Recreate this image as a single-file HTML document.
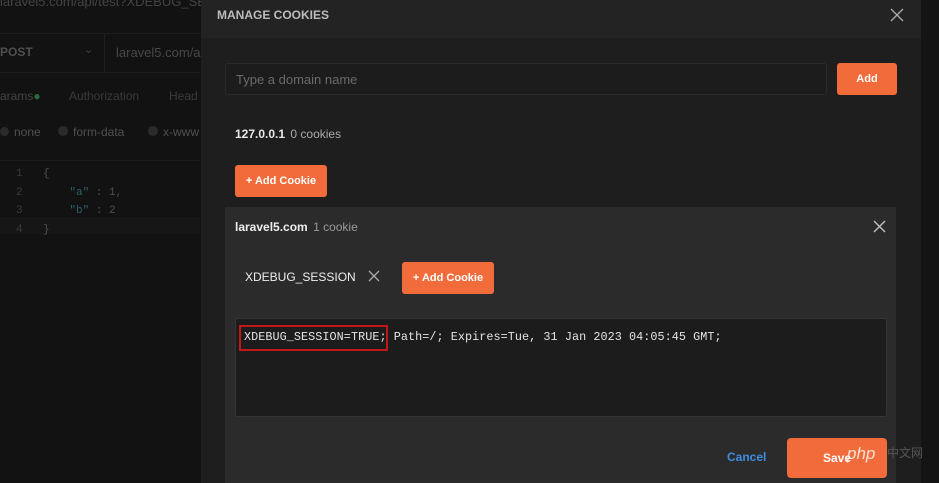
<!DOCTYPE html>
<html><head><style>
*{margin:0;padding:0;box-sizing:border-box}
body{width:939px;height:483px;overflow:hidden;background:#121212;font-family:"Liberation Sans",sans-serif;position:relative}
.a{position:absolute;white-space:nowrap}
.btn{position:absolute;background:#f26b3a;color:#fff;font-weight:bold;font-size:11px;border-radius:3px;display:flex;align-items:center;justify-content:center}
.mono{font-family:"Liberation Mono",monospace}
</style></head><body>
<!-- backdrop -->
<div class="a" style="left:0;top:-6px;color:#444;font-size:13px">laravel5.com/api/test?XDEBUG_SE</div>
<div class="a" style="left:0;top:33px;width:200px;height:40px;border-top:1px solid #1c1c1c;border-bottom:1px solid #1c1c1c"></div>
<div class="a" style="left:104px;top:34px;width:1px;height:38px;background:#1f1f1f"></div>
<div class="a" style="left:0;top:45px;color:#4e4e4e;font-size:12px;font-weight:bold">POST</div>
<div class="a" style="left:84px;top:43px;color:#444;font-size:11px">&#8964;</div>
<div class="a" style="left:116px;top:45px;color:#484848;font-size:13px">laravel5.com/ap</div>
<div class="a" style="left:0;top:89px;color:#444;font-size:12px">arams<span style="color:#2e6b3a">●</span></div>
<div class="a" style="left:69px;top:89px;color:#3a3a3a;font-size:12px">Authorization</div>
<div class="a" style="left:169px;top:89px;color:#3a3a3a;font-size:12px">Head</div>
<div class="a" style="left:0;top:125px;color:#505050;font-size:12px"><span style="display:inline-block;width:9px;height:9px;border-radius:50%;background:#2a2a2a;margin-right:5px"></span>none</div>
<div class="a" style="left:58px;top:125px;color:#505050;font-size:12px"><span style="display:inline-block;width:10px;height:10px;border-radius:50%;background:#2a2a2a;margin-right:5px"></span>form-data</div>
<div class="a" style="left:148px;top:125px;color:#505050;font-size:12px"><span style="display:inline-block;width:10px;height:10px;border-radius:50%;background:#2a2a2a;margin-right:5px"></span>x-www</div>
<div class="a" style="left:0;top:160px;width:200px;height:1px;background:#1a1a1a"></div>
<div class="a" style="left:0;top:217px;width:200px;height:17px;background:#161616"></div>
<div class="a mono" style="left:16px;top:165px;color:#3a3a3a;font-size:11px;line-height:18.5px">1<br>2<br>3<br>4</div>
<div class="a mono" style="left:43px;top:165px;color:#505050;font-size:11px;line-height:18.5px">{<br>&nbsp;&nbsp;&nbsp;&nbsp;<span style="color:#2d5f6e">"a"</span> : 1,<br>&nbsp;&nbsp;&nbsp;&nbsp;<span style="color:#2d5f6e">"b"</span> : 2<br>}</div>
<!-- modal -->
<div class="a" style="left:201px;top:0;width:720px;height:483px;background:#1e1e1e"></div>
<div class="a" style="left:201px;top:0;width:720px;height:38px;background:#232323"></div>
<div class="a" style="left:217px;top:8px;color:#bdbdbd;font-size:12px;font-weight:bold">MANAGE COOKIES</div>
<svg class="a" style="left:890px;top:8px" width="14" height="14"><path d="M1 1L13 13M13 1L1 13" stroke="#aaa" stroke-width="1.3"/></svg>
<div class="a" style="left:921px;top:0;width:18px;height:483px;background:#141414"></div>
<div class="a" style="left:225px;top:63px;width:602px;height:32px;background:#1c1c1c;border:1px solid #2b2b2b;border-radius:3px"></div>
<div class="a" style="left:236px;top:72px;color:#6a6a6a;font-size:13px">Type a domain name</div>
<div class="btn" style="left:837px;top:63px;width:60px;height:32px">Add</div>
<div class="a" style="left:235px;top:127px;color:#e8e8e8;font-size:12px;font-weight:bold">127.0.0.1 <span style="color:#aaa;font-weight:normal;margin-left:2px">0 cookies</span></div>
<div class="btn" style="left:235px;top:165px;width:92px;height:32px">+ Add Cookie</div>
<!-- inner panel -->
<div class="a" style="left:225px;top:207px;width:671px;height:276px;background:#2b2b2b"></div>
<div class="a" style="left:235px;top:220px;color:#eee;font-size:12px;font-weight:bold">laravel5.com <span style="color:#999;font-weight:normal;margin-left:2px">1 cookie</span></div>
<svg class="a" style="left:873px;top:220px" width="13" height="13"><path d="M1 1L12 12M12 1L1 12" stroke="#bbb" stroke-width="1.5"/></svg>
<div class="a" style="left:245px;top:270px;color:#eee;font-size:12px">XDEBUG_SESSION</div>
<svg class="a" style="left:368px;top:270px" width="12" height="12"><path d="M1 1L11 11M11 1L1 11" stroke="#aaa" stroke-width="1.3"/></svg>
<div class="btn" style="left:402px;top:262px;width:92px;height:32px">+ Add Cookie</div>
<div class="a" style="left:235px;top:318px;width:652px;height:99px;background:#1c1c1c;border:1px solid #363636;border-radius:3px"></div>
<div class="a mono" style="left:244px;top:330px;color:#e4e4e4;font-size:11.8px;letter-spacing:0.05px">XDEBUG_SESSION=TRUE; Path=/; Expires=Tue, 31 Jan 2023 04:05:45 GMT;</div>
<div class="a" style="left:239px;top:325px;width:149px;height:26px;border:2px solid #c0171a"></div>
<div class="a" style="left:727px;top:450px;color:#3d8ee0;font-size:12px;font-weight:bold">Cancel</div>
<div class="btn" style="left:787px;top:438px;width:100px;height:40px;font-size:12px;border-radius:4px">Save</div>
<div class="a" style="left:847px;top:444px;color:#fff;font-size:17px;font-style:italic;opacity:.8">php</div>
<div class="a" style="left:887px;top:444px;color:#555;font-size:12px;font-family:'Liberation Sans','Noto Sans CJK SC',sans-serif">中文网</div>
</body></html>
